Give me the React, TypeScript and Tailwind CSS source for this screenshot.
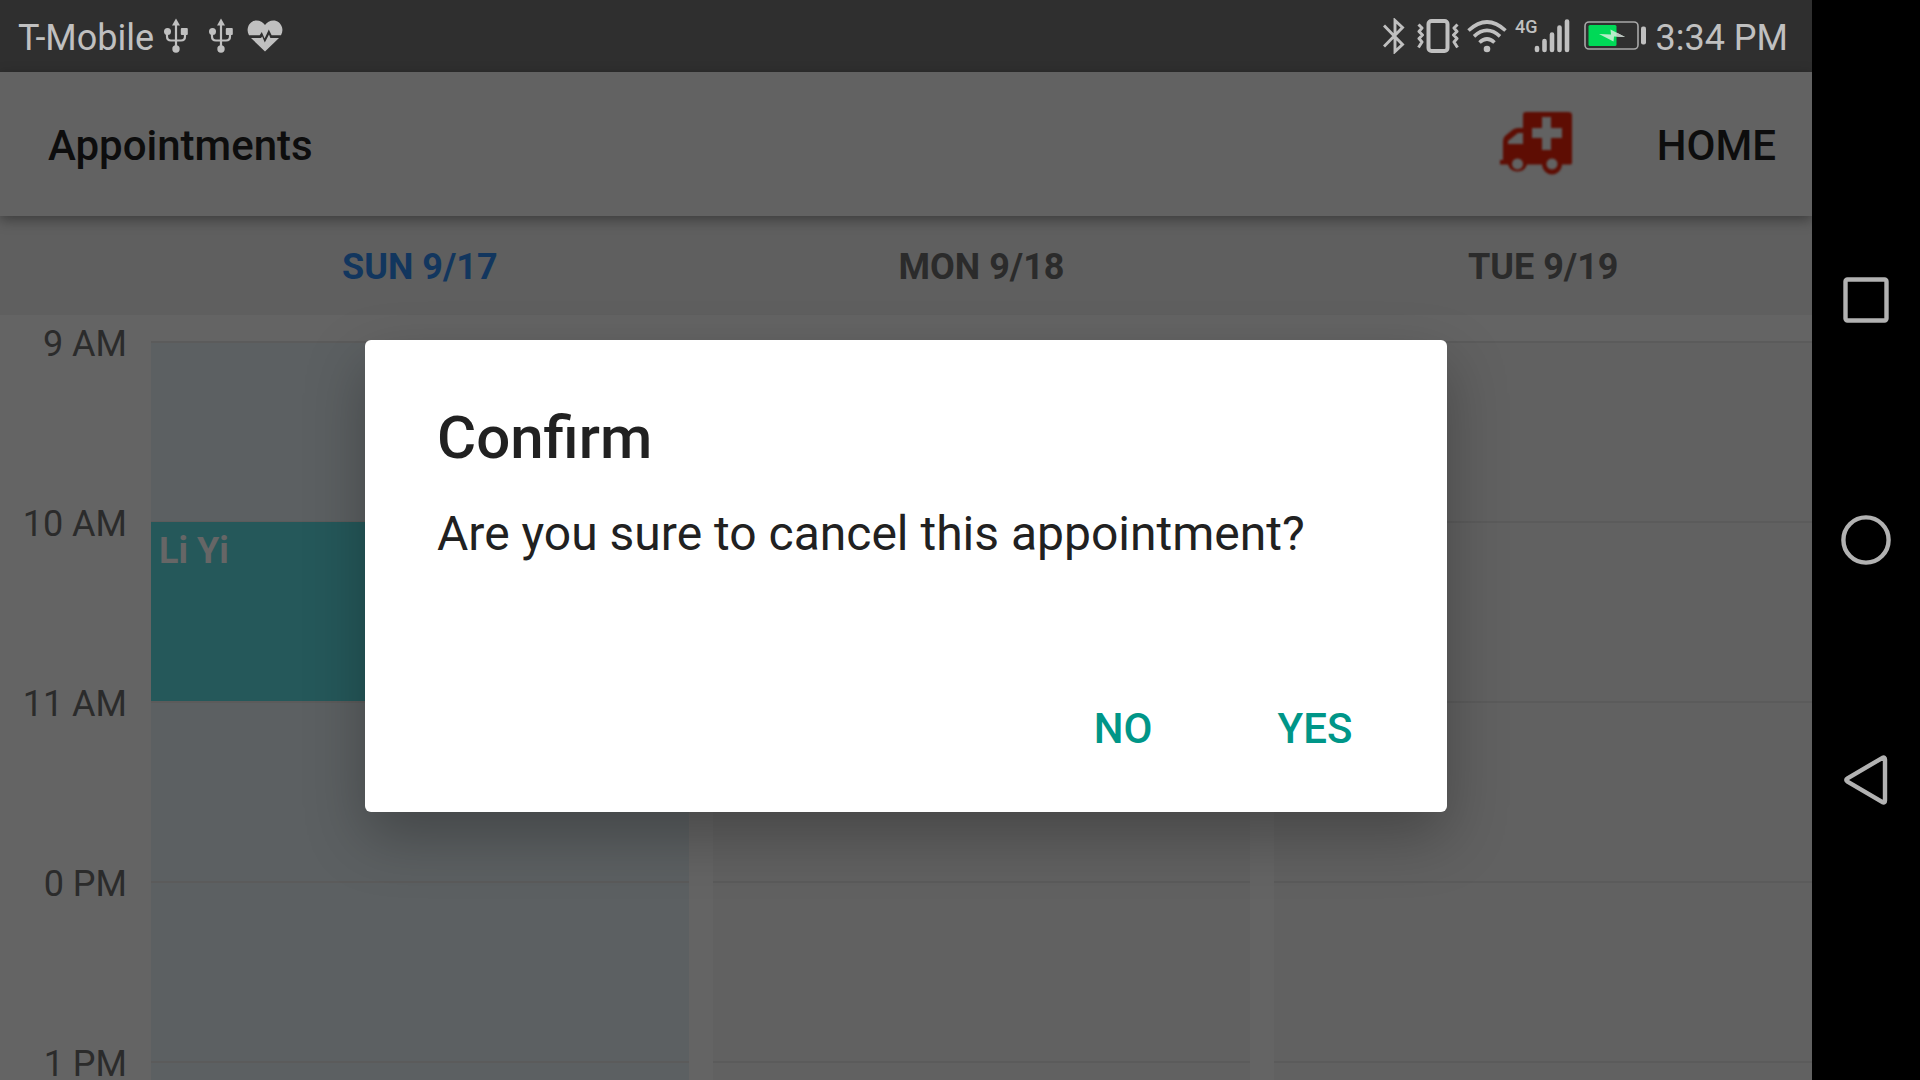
import React from "react";

const days = [
  { label: "SUN 9/17", today: true },
  { label: "MON 9/18", today: false },
  { label: "TUE 9/19", today: false },
];

const hours = ["9 AM", "10 AM", "11 AM", "0 PM", "1 PM"];

const appointment = { day: "SUN 9/17", hour: "10 AM", name: "Li Yi" };

function UsbIcon() {
  return (
    <svg width="24" height="36" viewBox="0 0 24 36" fill="none" aria-hidden="true">
      <path d="M12 4v26M3 13v5.500q0 4 4 4h10q4 0 4-4V13" stroke="currentColor" strokeWidth="2.200" />
      <path d="M12 0.500 16 7.500H8z" fill="currentColor" />
      <circle cx="3.500" cy="13.500" r="3.500" fill="currentColor" />
      <rect x="16.800" y="10" width="7" height="7" rx="1" fill="currentColor" />
      <circle cx="12" cy="31" r="3.700" fill="currentColor" />
    </svg>
  );
}

function HeartIcon() {
  return (
    <svg width="36" height="32" viewBox="0 0 36 32" fill="currentColor" aria-hidden="true">
      <path d="M2 15.200C0.500 12.500 0.200 10 1 7.200 2.300 3 5.600 0.500 9.600 0.500c3.400 0 6.600 1.700 8.400 4.600C19.800 2.200 23 0.500 26.400 0.500c4 0 7.300 2.500 8.600 6.700 0.800 2.800 0.500 5.300-1 8H24.600L21.800 9.500 17.600 18.500 14.800 12 12.700 15.200z" />
      <path d="M4 18h10l1.200-1.600L17.800 22.600 22 14.500 23.400 18H32L18 31.500z" />
    </svg>
  );
}

function BluetoothIcon() {
  return (
    <svg width="22" height="36" viewBox="0 0 22 36" fill="none" aria-hidden="true">
      <path d="M1 7.500 19.500 26.500 12 33.500V2.500L19.500 9.500 1 28.500" stroke="currentColor" strokeWidth="2.900" />
    </svg>
  );
}

function VibrateIcon() {
  return (
    <svg width="42" height="34" viewBox="0 0 42 34" fill="none" stroke="currentColor" aria-hidden="true">
      <rect x="11.500" y="2" width="19" height="30" rx="3" strokeWidth="4" />
      <path d="M1.500 5.500 5 9 2 12.500 5.500 16 2 19.500 5 23 1.500 28.500M40.500 5.500 37 9 40 12.500 36.500 16 40 19.500 37 23 40.500 28.500" strokeWidth="3" strokeLinejoin="round" />
    </svg>
  );
}

function WifiIcon() {
  return (
    <svg width="40" height="33" viewBox="0 0 40 33" fill="none" stroke="currentColor" strokeWidth="3.600" aria-hidden="true">
      <path d="M1.500 10.500Q20-6.500 38.500 10.500M7 16.300Q20 4.500 33 16.300M12.500 22.500Q20 15.500 27.500 22.500" />
      <circle cx="20" cy="29" r="3.300" fill="currentColor" stroke="none" />
    </svg>
  );
}

function SignalIcon() {
  return (
    <svg width="36" height="34" viewBox="0 0 36 34" stroke="currentColor" strokeWidth="4.600" strokeLinecap="round" aria-hidden="true">
      <path d="M3 29v2M10.500 22v9M18 15.500V31M25.500 8.500V31M33 2.500V31" />
    </svg>
  );
}

function BatteryIcon() {
  return (
    <svg width="62" height="30" viewBox="0 0 62 30" fill="none" aria-hidden="true">
      <rect x="1" y="1" width="53" height="27" rx="4" stroke="#a8a8a8" strokeWidth="1.600" />
      <rect x="4.500" y="4" width="28" height="21" rx="1.500" fill="#00d957" />
      <path d="M15 13 27 13.500 26.500 8.500 41 16 30 15.500 29.500 20.500z" fill="#b4eec9" />
      <path d="M32.500 11.600 41 16 32.500 15.600z" fill="#c0c0c0" />
      <rect x="57" y="5.500" width="5" height="18" rx="2" fill="#c0c0c0" />
    </svg>
  );
}

function AmbulanceIcon() {
  return (
    <svg width="72" height="66" viewBox="0 0 72 66" className="blur-[1px]" aria-hidden="true">
      <path
        fillRule="evenodd"
        fill="#5e0d03"
        d="M26 1H68Q72 1 72 4V52Q72 53.500 70 53.500H62A10 10 0 0 1 42 53.500H27A10 10 0 0 1 8 53.500H0V49H3V30Q3 27 5 25L13 18.500Q15 17 18 17H23V4Q23 1 26 1ZM42 6V17H32V27H42V39H51V27H62V17H51V6ZM23 22H18L8 30V33H23ZM17.500 47.500a5.500 5.500 0 1 0 0.010 0ZM52 47.500a5.500 5.500 0 1 0 0.010 0Z"
      />
    </svg>
  );
}

function StatusBar() {
  return (
    <div className="flex h-18 shrink-0 items-center justify-between bg-[#2f2f2f] pl-[18px] pr-6 text-[36px] leading-[68px] text-[#c0c0c0]">
      <div className="flex items-center">
        <span className="pt-1">T-Mobile</span>
        <div className="ml-2.5 flex items-center gap-[21px]">
          <UsbIcon />
          <UsbIcon />
        </div>
        <div className="ml-3.5">
          <HeartIcon />
        </div>
      </div>
      <div className="flex items-center">
        <BluetoothIcon />
        <div className="ml-3 mr-2">
          <VibrateIcon />
        </div>
        <WifiIcon />
        <div className="ml-2 flex items-center">
          <span className="-mr-1 h-[34px] text-lg leading-4 font-medium">4G</span>
          <SignalIcon />
        </div>
        <div className="ml-3.5 mr-2.5">
          <BatteryIcon />
        </div>
        <span className="pt-1">3:34 PM</span>
      </div>
    </div>
  );
}

function AppBar() {
  return (
    <header className="relative z-10 flex h-36 shrink-0 items-center justify-between bg-[#626262] pl-12 pr-9 text-[42px] font-medium text-[#0d0d0d] shadow-[0_4px_12px_rgba(0,0,0,0.36)]">
      <h1 className="pt-0.5">Appointments</h1>
      <div className="flex items-center gap-[85px]">
        <button type="button" aria-label="Emergency">
          <AmbulanceIcon />
        </button>
        <button type="button" className="pt-0.5">
          HOME
        </button>
      </div>
    </header>
  );
}

function Calendar() {
  return (
    <main className="flex min-h-0 flex-1 flex-col overflow-hidden bg-[#646464] text-[36px] text-[#2b2b2b]">
      <div className="flex h-[99px] shrink-0 gap-6 bg-[#5f5f5f] pt-1 pl-[151px] text-center leading-[95px] font-bold">
        {days.map((day) => (
          <div key={day.label} className={day.today ? "flex-1 text-[#12365e]" : "flex-1"}>
            {day.label}
          </div>
        ))}
      </div>
      <div className="flex min-h-0 flex-1">
        <div className="w-[151px] shrink-0 pr-6 text-right leading-[58px]">
          {hours.map((hour) => (
            <div key={hour} className="h-[180px]">
              {hour}
            </div>
          ))}
        </div>
        <div className="flex flex-1 gap-6 pt-[26px]">
          {days.map((day) => (
            <div key={day.label} className={day.today ? "flex-1 bg-[#5c6062]" : "flex-1 bg-[#616161]"}>
              {hours.map((hour) => (
                <div key={hour} className="h-[180px] border-t-2 border-[#5b5b5b]">
                  {day.label === appointment.day && hour === appointment.hour && (
                    <div className="-mt-px h-[180px] bg-[#25585a] px-2 pt-1 leading-[50px] font-bold text-[#666666]">{appointment.name}</div>
                  )}
                </div>
              ))}
            </div>
          ))}
        </div>
      </div>
    </main>
  );
}

function ConfirmDialog() {
  return (
    <div className="absolute inset-x-0 top-18 bottom-0 z-20 flex items-center justify-center">
      <div
        role="dialog"
        aria-labelledby="confirm-title"
        aria-describedby="confirm-message"
        className="w-full max-w-[1082px] rounded-md bg-white px-18 pt-[62px] pb-[30px] text-[#212121] shadow-[0_24px_60px_rgba(0,0,0,0.28)]"
      >
        <h2 id="confirm-title" className="text-[60px] leading-[72px] font-medium">
          Confirm
        </h2>
        <p id="confirm-message" className="mt-[30px] text-5xl leading-[60px]">
          Are you sure to cancel this appointment?
        </p>
        <div className="mt-[110px] -mr-9 flex justify-end text-[42px] font-medium text-[#009688]">
          <button type="button" className="h-27 w-48">
            NO
          </button>
          <button type="button" className="h-27 w-48">
            YES
          </button>
        </div>
      </div>
    </div>
  );
}

function NavigationBar() {
  return (
    <nav className="flex w-27 shrink-0 flex-col justify-center bg-black text-[#b2b2b2]">
      <button type="button" aria-label="Recent apps" className="flex h-60 items-center justify-center">
        <svg width="50" height="50" viewBox="0 0 50 50" fill="none" stroke="currentColor" strokeWidth="4.400">
          <rect x="4.500" y="4.500" width="41" height="41" rx="2" />
        </svg>
      </button>
      <button type="button" aria-label="Home" className="flex h-60 items-center justify-center">
        <svg width="50" height="50" viewBox="0 0 50 50" fill="none" stroke="currentColor" strokeWidth="4.400">
          <circle cx="25" cy="25" r="22.600" />
        </svg>
      </button>
      <button type="button" aria-label="Back" className="flex h-60 items-center justify-center">
        <svg width="50" height="50" viewBox="0 0 50 50" fill="none" stroke="currentColor" strokeWidth="4.400" strokeLinejoin="round">
          <path d="M41.500 2.800q2.500-1 2.500 1.700v41q0 2.700-2.500 1.700L6.500 26.600q-2.500-1.600 0-3.200z" />
        </svg>
      </button>
    </nav>
  );
}

export default function App() {
  return (
    <div className="flex h-screen overflow-hidden font-[Roboto,sans-serif]">
      <div className="relative flex min-w-0 flex-1 flex-col">
        <StatusBar />
        <AppBar />
        <Calendar />
        <ConfirmDialog />
      </div>
      <NavigationBar />
    </div>
  );
}
